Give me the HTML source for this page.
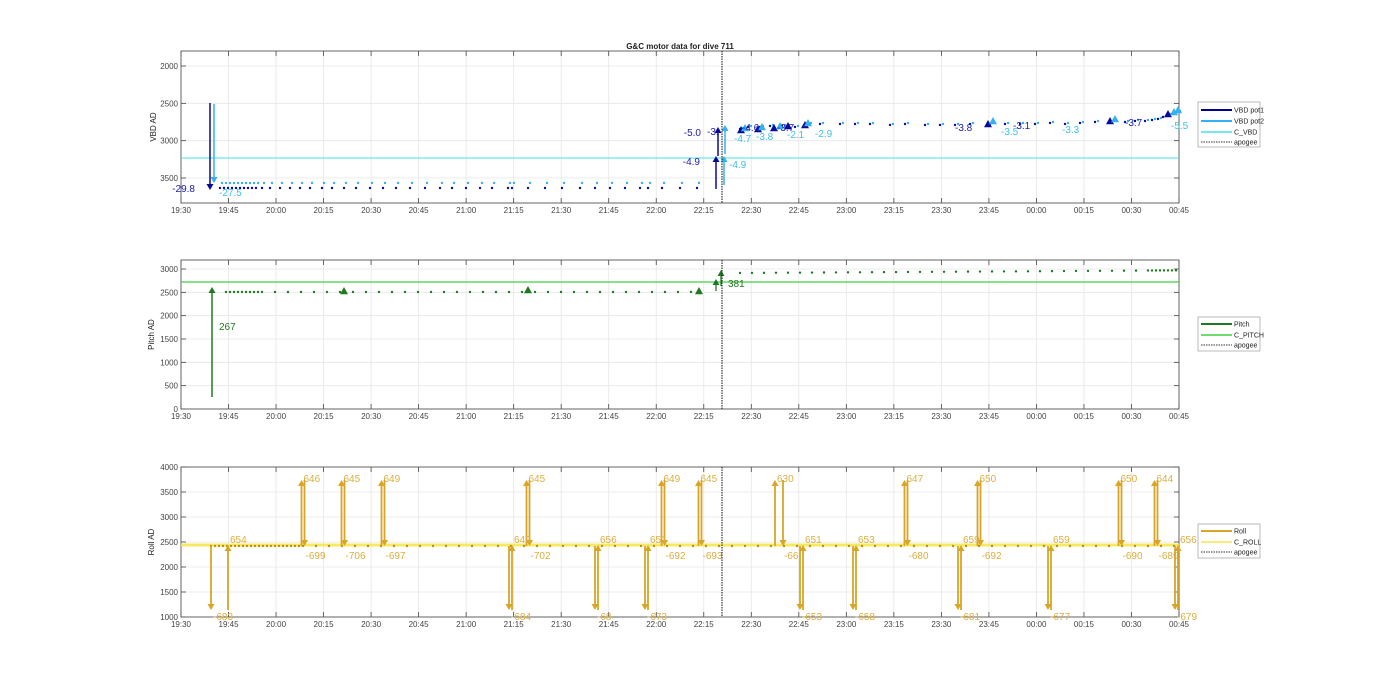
<!DOCTYPE html>
<html><head><meta charset="utf-8"><style>
html,body{margin:0;padding:0;background:#fff;width:1400px;height:693px;overflow:hidden}
svg{display:block;font-family:"Liberation Sans",Arial,sans-serif}
</style></head><body>
<svg id="s" width="1400" height="693" viewBox="0 0 1400 693" xmlns="http://www.w3.org/2000/svg">
<rect width="1400" height="693" fill="#fff"/>
<text x="680" y="49" font-size="8" font-weight="bold" text-anchor="middle" fill="#222">G&amp;C motor data for dive 711</text>
<g id="g"></g>
<g font-size="7" fill="#222">
<rect x="1198" y="102" width="62" height="45" fill="#fff" stroke="#aaa" stroke-width="0.8"/>
<line x1="1201" y1="110" x2="1232" y2="110" stroke="#000090" stroke-width="2"/><text x="1234" y="112.5">VBD pot1</text>
<line x1="1201" y1="121" x2="1232" y2="121" stroke="#35b0f0" stroke-width="2"/><text x="1234" y="123.5">VBD pot2</text>
<line x1="1201" y1="132" x2="1232" y2="132" stroke="#45e0e8" stroke-width="1.5"/><text x="1234" y="134.5">C_VBD</text>
<line x1="1201" y1="142" x2="1232" y2="142" stroke="#333" stroke-width="1" stroke-dasharray="1.5,1"/><text x="1234" y="144.5">apogee</text>
<rect x="1198" y="317" width="62" height="34" fill="#fff" stroke="#aaa" stroke-width="0.8"/>
<line x1="1201" y1="324" x2="1232" y2="324" stroke="#1f7a1f" stroke-width="2"/><text x="1234" y="326.5">Pitch</text>
<line x1="1201" y1="335" x2="1232" y2="335" stroke="#40d040" stroke-width="1.5"/><text x="1234" y="337.5">C_PITCH</text>
<line x1="1201" y1="345" x2="1232" y2="345" stroke="#333" stroke-width="1" stroke-dasharray="1.5,1"/><text x="1234" y="347.5">apogee</text>
<rect x="1198" y="524" width="62" height="34" fill="#fff" stroke="#aaa" stroke-width="0.8"/>
<line x1="1201" y1="531" x2="1232" y2="531" stroke="#d9a526" stroke-width="2"/><text x="1234" y="533.5">Roll</text>
<line x1="1201" y1="542" x2="1232" y2="542" stroke="#f5e64a" stroke-width="1.5"/><text x="1234" y="544.5">C_ROLL</text>
<line x1="1201" y1="552" x2="1232" y2="552" stroke="#333" stroke-width="1" stroke-dasharray="1.5,1"/><text x="1234" y="554.5">apogee</text>
</g>
</svg>
<script>
var NS="http://www.w3.org/2000/svg",G=document.getElementById("g");
function el(t,a,txt){var e=document.createElementNS(NS,t);for(var k in a)e.setAttribute(k,a[k]);if(txt!=null)e.textContent=txt;G.appendChild(e);return e;}
var X0=181,X1=1179;
var labs=["19:30","19:45","20:00","20:15","20:30","20:45","21:00","21:15","21:30","21:45","22:00","22:15","22:30","22:45","23:00","23:15","23:30","23:45","00:00","00:15","00:30","00:45"];
function axes(top,bot,ylab,yticks,ymap,name){
  el("rect",{x:X0,y:top,width:X1-X0,height:bot-top,fill:"#fff"});
  for(var i=0;i<22;i++){var x=X0+(X1-X0)*i/21;
    el("line",{x1:x,y1:top,x2:x,y2:bot,stroke:"#e6e6e6","stroke-width":0.8});
    el("line",{x1:x,y1:bot,x2:x,y2:bot-5,stroke:"#444","stroke-width":0.8});
    el("line",{x1:x,y1:top,x2:x,y2:top+5,stroke:"#444","stroke-width":0.8});
    el("text",{x:x,y:bot+10,"font-size":8,"text-anchor":"middle",fill:"#444"},labs[i]);}
  yticks.forEach(function(v){var y=ymap(v);
    el("line",{x1:X0,y1:y,x2:X1,y2:y,stroke:"#e6e6e6","stroke-width":0.8});
    el("line",{x1:X0,y1:y,x2:X0+5,y2:y,stroke:"#444","stroke-width":0.8});
    el("line",{x1:X1,y1:y,x2:X1-5,y2:y,stroke:"#444","stroke-width":0.8});
    el("text",{x:X0-3,y:y+3,"font-size":8,"text-anchor":"end",fill:"#444"},String(v));});
  el("rect",{x:X0,y:top,width:X1-X0,height:bot-top,fill:"none",stroke:"#555","stroke-width":0.9});
  var cy=(top+bot)/2;
  el("text",{x:0,y:0,"font-size":8,"text-anchor":"middle",fill:"#222",transform:"translate("+(ylab)+","+cy+") rotate(-90)"},name);
}
function tm(m){return X0+(X1-X0)*m/315;}
var yT=function(v){return 66+(v-2000)*112/1500;};
axes(51,203,156,[2000,2500,3000,3500],yT,"VBD AD");
var yM=function(v){return 409-v*140/3000;};
axes(260,409,154,[0,500,1000,1500,2000,2500,3000],yM,"Pitch AD");
var yB=function(v){return 617-(v-1000)*150/3000;};
axes(467,617,154,[1000,1500,2000,2500,3000,3500,4000],yB,"Roll AD");

function arrow(x,y1,y2,c,w){el("line",{x1:x,y1:y1,x2:x,y2:y2+(y2>y1?-4:4),stroke:c,"stroke-width":w||1.5});
  var d=y2>y1?-1:1; el("polygon",{points:(x-3.5)+","+(y2+d*6)+" "+(x+3.5)+","+(y2+d*6)+" "+x+","+y2,fill:c});}
function tri(x,y,c,s){s=s||4;el("polygon",{points:(x-s)+","+(y+s*0.8)+" "+(x+s)+","+(y+s*0.8)+" "+x+","+(y-s),fill:c});}
function dot(x,y,c){el("circle",{cx:x,cy:y,r:1.2,fill:c});}
function txt(x,y,s,c,a){el("text",{x:x,y:y,"font-size":10,fill:c,"text-anchor":a||"start"},s);}
var D="#0a0a9a",L="#35b0f0",C="#45e0e8",DT="#2020b0",LT="#40c0e8";
el("line",{x1:X0,y1:158,x2:X1,y2:158,stroke:C,"stroke-width":1});
var pre=[220,224,228,232,236,240,244,248,252,256,262,270,280,290,300,310,322,332,344,356,370,383,396,410,425,440,452,466,480,492,508,512,528,545,562,580,595,610,625,640,648,662,680,697];
pre.forEach(function(x){dot(x,188,D);dot(x+2,183,L);});
arrow(210,103,190,D);arrow(214,104,183,L);
txt(195,192,"-29.8",DT,"end");txt(219,196,"-27.5",LT);
arrow(716,189,156,D);arrow(718,156,127,D);arrow(724,185,156,L);arrow(725,154,125,L);
txt(701,136,"-5.0",DT,"end");txt(707,135,"-3.",DT);txt(700,165,"-4.9",DT,"end");txt(729,168,"-4.9",LT);
var post=[[740,129],[748,127],[760,127],[770,126],[782,126],[795,127],[808,124],[820,124],[840,124],[855,124],[870,124],[890,125],[905,124],[925,125],[940,125],[955,125],[970,124],[990,124],[1005,124],[1020,124],[1035,124],[1050,123],[1065,124],[1080,123],[1095,122],[1110,122],[1125,122],[1135,121],[1145,121],[1152,120],[1158,119],[1163,117],[1168,115],[1173,114],[1177,112]];
post.forEach(function(p){dot(p[0],p[1],D);dot(p[0]+3,p[1]-1,L);});
[[741,130],[758,129],[774,128],[788,126],[805,125],[988,124],[1110,121],[1168,114]].forEach(function(p){tri(p[0],p[1],D);});
[[745,128],[762,127],[780,126],[808,123],[993,121],[1115,119],[1174,112],[1178,110]].forEach(function(p){tri(p[0],p[1],L);});
txt(734,142,"-4.7",LT);txt(742,131,"-4.6",DT);txt(756,140,"-3.8",LT);txt(777,131,"-3.7",DT);txt(787,138,"-2.1",LT);txt(815,137,"-2.9",LT);
txt(955,131,"-3.8",DT);txt(1001,135,"-3.5",LT);txt(1013,129,"-3.1",DT);txt(1062,133,"-3.3",LT);txt(1125,126,"-3.7",DT);txt(1171,129,"-5.5",LT);
el("line",{x1:722,y1:51,x2:722,y2:203,stroke:"#222","stroke-width":1.1,"stroke-dasharray":"1.5,1"});
var P="#1f7a1f";
el("line",{x1:X0,y1:282,x2:X1,y2:282,stroke:"#40d040","stroke-width":1.3});
arrow(212,397,287,P);txt(219,330,"267",P);
for(var x=226;x<700;x+=(x<262?4:13))dot(x,292,P);
tri(344,291,P);tri(528,290,P);tri(699,291,P);
arrow(716,291,279,P,1.3);arrow(721,286,270,P,1.3);txt(728,287,"381",P);
for(var x=740;x<1178;x+=(x<1140?12:4))dot(x,273-(x-740)*0.006,P);
el("line",{x1:722,y1:260,x2:722,y2:409,stroke:"#222","stroke-width":1.1,"stroke-dasharray":"1.5,1"});
var R="#d9a526",RT="#dcae40";
el("line",{x1:X0,y1:545,x2:X1,y2:545,stroke:"#f5e64a","stroke-width":3,opacity:0.85});
for(var x=211;x<1178;x+=(x<300?4:13))dot(x,546,"#b8901a");
function up(x,lab){arrow(x,546,480,R,1.8);txt(x+2,482,lab,RT);}
function dn(x,lab){arrow(x,480,546,R,1.8);txt(x+1,559,lab,RT);}
function low(x,lab){arrow(x,546,610,R,1.8);txt(x+2,620,lab,RT);}
function lowup(x,lab){arrow(x,610,545,R,1.8);txt(x+2,543,lab,RT);}
low(211,"-683");lowup(228,"654");
[[303,"646","-699"],[343,"645","-706"],[383,"649","-697"],[528,"645","-702"],[663,"649","-692"],[700,"645","-693"],[906,"647","-680"],[979,"650","-692"],[1120,"650","-690"],[1156,"644","-689"]].forEach(function(a){up(a[0]-1.5,a[1]);dn(a[0]+1.5,a[2]);});
up(775,"630");dn(783,"-66");
[[509,"-684","649"],[595,"-68","656"],[645,"-673","651"],[800,"-653","651"],[853,"-658","653"],[958,"-681","659"],[1048,"-677","659"],[1175,"-679","656"]].forEach(function(a){low(a[0],a[1]);lowup(a[0]+3,a[2]);});
el("line",{x1:722,y1:467,x2:722,y2:617,stroke:"#222","stroke-width":1.1,"stroke-dasharray":"1.5,1"});
</script>
</body></html>
